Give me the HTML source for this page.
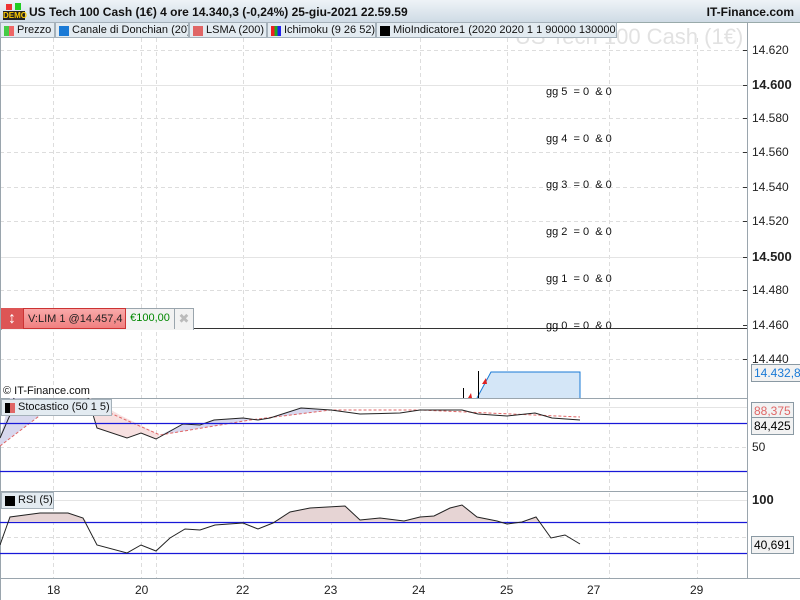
<!DOCTYPE html>
<html><head><meta charset="utf-8"><style>
body{margin:0;width:800px;height:600px;overflow:hidden;background:#fff;font-family:"Liberation Sans",sans-serif;position:relative}
.a{position:absolute;white-space:nowrap}
#title{left:0;top:0;width:800px;height:22px;background:linear-gradient(#eef3f7,#cfdbe5);border-bottom:1px solid #9aa;}
.leg{position:absolute;top:22px;height:16px;background:#e3ebf1;border:1px solid #a5b1ba;font-size:11px;line-height:15px;color:#111;box-sizing:border-box;padding-left:16px;white-space:nowrap;overflow:hidden}
.sw{position:absolute;left:3px;top:3px;width:10px;height:10px}
.ax{font-size:12px;color:#222}
.gg{font-size:11px;color:#111}
.lbl{position:absolute;font-size:12px;border:1px solid #8a99a3;background:#f2f2f2;height:16px;line-height:16px;padding:0 2px}
</style></head><body>
<div class="a" id="title"></div>
<div class="a" style="left:3px;top:3px;width:22px;height:17px">
 <div class="a" style="left:3px;top:1px;width:6px;height:6px;background:#e33"></div>
 <div class="a" style="left:12px;top:0;width:6px;height:7px;background:#2c2"></div>
 <div class="a" style="left:0;top:8px;width:22px;height:9px;background:#222;color:#fc0;font-size:8px;line-height:9px;font-weight:bold;text-align:center">DEMO</div>
</div>
<div class="a" style="left:29px;top:5px;font-size:12px;font-weight:bold;color:#111">US Tech 100 Cash (1€) 4 ore 14.340,3 (-0,24%) 25-giu-2021 22.59.59</div>
<div class="a" style="right:6px;top:5px;font-size:12px;font-weight:bold;color:#111">IT-Finance.com</div>

<div class="a" style="left:515px;top:24px;font-size:22px;color:#e2e2e2">US Tech 100 Cash (1€)</div>

<div class="leg" style="left:0;width:55px"><span class="sw" style="background:linear-gradient(90deg,#4c4 50%,#e66 50%)"></span>Prezzo</div>
<div class="leg" style="left:55px;width:134px"><span class="sw" style="background:#1a7ad6"></span>Canale di Donchian (20)</div>
<div class="leg" style="left:189px;width:78px"><span class="sw" style="background:#e06666"></span>LSMA (200)</div>
<div class="leg" style="left:267px;width:109px"><span class="sw" style="background:linear-gradient(90deg,#e22 33%,#2a2 33%,#2a2 66%,#22e 66%)"></span>Ichimoku (9 26 52)</div>
<div class="leg" style="left:376px;width:241px"><span class="sw" style="background:#000"></span>MioIndicatore1 (2020 2020 1 1 90000 130000)</div>

<svg class="a" style="left:0;top:0" width="800" height="600">
<g stroke="#ddd" stroke-dasharray="4,3" stroke-width="1">
<line x1="53.5" y1="38" x2="53.5" y2="578"/><line x1="141.5" y1="38" x2="141.5" y2="578"/><line x1="156.5" y1="38" x2="156.5" y2="578"/><line x1="243.5" y1="38" x2="243.5" y2="578"/><line x1="331.5" y1="38" x2="331.5" y2="578"/><line x1="420.5" y1="38" x2="420.5" y2="578"/><line x1="507.5" y1="38" x2="507.5" y2="578"/><line x1="609.5" y1="38" x2="609.5" y2="578"/><line x1="697.5" y1="38" x2="697.5" y2="578"/>
<line x1="0" y1="50.5" x2="747" y2="50.5"/><line x1="0" y1="118.5" x2="747" y2="118.5"/><line x1="0" y1="152.5" x2="747" y2="152.5"/><line x1="0" y1="187.5" x2="747" y2="187.5"/><line x1="0" y1="221.5" x2="747" y2="221.5"/><line x1="0" y1="290.5" x2="747" y2="290.5"/><line x1="0" y1="359.5" x2="747" y2="359.5"/>
<line x1="0" y1="447.5" x2="747" y2="447.5"/><line x1="0" y1="537.5" x2="747" y2="537.5"/>
</g>
<g stroke="#e4e4e4"><line x1="0" y1="85.5" x2="747" y2="85.5"/><line x1="0" y1="257.5" x2="747" y2="257.5"/><line x1="0" y1="407.5" x2="747" y2="407.5"/><line x1="0" y1="500.5" x2="747" y2="500.5"/></g>
<line x1="0" y1="328.5" x2="747" y2="328.5" stroke="#333"/>
<path d="M477 398 L491 372 L580 372 L580 398Z" fill="#d4e6f7" stroke="none"/>
<path d="M477 398 L491 372 L580 372 L580 398" fill="none" stroke="#1a7ad6"/>
<line x1="463.5" y1="388" x2="463.5" y2="398" stroke="#000"/><line x1="478.5" y1="371" x2="478.5" y2="398" stroke="#000"/>
<path d="M468 398 l3-5 1 5z M482 384 l4-6 1 6z" fill="#d22"/>
<g stroke="#9aa5ad"><line x1="0" y1="398.5" x2="747" y2="398.5"/><line x1="0" y1="491.5" x2="747" y2="491.5"/><line x1="0" y1="578.5" x2="800" y2="578.5"/><line x1="747.5" y1="22" x2="747.5" y2="578"/><line x1="0.5" y1="38" x2="0.5" y2="600"/></g>
<path d="M0 446 L60 400 L10 398 L0 438Z" fill="#d8d8ee"/>
<path d="M90 398 L97 428 L127 438 L141 433 L156 439 L160 435 L120 415 Z" fill="#f7e0e0"/>
<path d="M160 435 L183 424 L200 425 L214 420 L243 418 L258 420 L270 418 L301 408 L331 410 L300 414 L250 420 Z" fill="#d8d8ee"/>
<path d="M0 446 L60 400 M110 413 L160 435 L250 420 L331 410 L420 410 L580 417" fill="none" stroke="#e06666" stroke-dasharray="3,2"/>
<path d="M0 438 L10 415 L14 398 M88 398 L97 428 L127 438 L141 433 L156 439 L183 424 L200 425 L214 420 L243 418 L258 420 L270 418 L301 408 L331 410 L360 414 L400 413 L420 410 L462 410 L478 414 L507 416 L535 413 L552 418 L580 420" fill="none" stroke="#222"/>
<g stroke="#1818d8" stroke-width="1.2"><line x1="0" y1="423.5" x2="747" y2="423.5"/><line x1="0" y1="471.5" x2="747" y2="471.5"/><line x1="0" y1="522.5" x2="747" y2="522.5"/><line x1="0" y1="553.5" x2="747" y2="553.5"/></g>
<path d="M8 522 L10 517 L40 513 L68 513 L83 518 L87 522Z M275 522 L290 512 L310 508 L345 506 L360 520 L380 518 L404 521 L420 517 L434 516 L450 508 L462 505 L477 517 L497 521 L502 522 Z M525 522 L536 517 L539 522Z" fill="#e6d4d4"/>
<path d="M0 545 L10 517 L40 513 L68 513 L83 518 L97 545 L127 553 L141 545 L156 551 L170 538 L185 529 L200 530 L215 525 L243 523 L258 529 L273 523 L290 512 L310 508 L345 506 L360 520 L380 518 L404 521 L420 517 L434 516 L450 508 L462 505 L477 517 L497 521 L507 524 L522 522 L536 517 L551 538 L565 535 L580 544" fill="none" stroke="#222"/>
<g stroke="#333"><line x1="743" y1="50.5" x2="747" y2="50.5"/><line x1="743" y1="85.5" x2="747" y2="85.5"/><line x1="743" y1="118.5" x2="747" y2="118.5"/><line x1="743" y1="152.5" x2="747" y2="152.5"/><line x1="743" y1="187.5" x2="747" y2="187.5"/><line x1="743" y1="221.5" x2="747" y2="221.5"/><line x1="743" y1="257.5" x2="747" y2="257.5"/><line x1="743" y1="290.5" x2="747" y2="290.5"/><line x1="743" y1="325.5" x2="747" y2="325.5"/><line x1="743" y1="359.5" x2="747" y2="359.5"/></g>
</svg>

<div class="a ax" style="left:752px;top:43px">14.620</div>
<div class="a ax" style="left:752px;top:77px;font-weight:bold;font-size:13px">14.600</div>
<div class="a ax" style="left:752px;top:111px">14.580</div>
<div class="a ax" style="left:752px;top:145px">14.560</div>
<div class="a ax" style="left:752px;top:180px">14.540</div>
<div class="a ax" style="left:752px;top:214px">14.520</div>
<div class="a ax" style="left:752px;top:249px;font-weight:bold;font-size:13px">14.500</div>
<div class="a ax" style="left:752px;top:283px">14.480</div>
<div class="a ax" style="left:752px;top:318px">14.460</div>
<div class="a ax" style="left:752px;top:352px">14.440</div>
<div class="lbl" style="left:751px;top:364px;color:#1a7ad6">14.432,8</div>
<div class="lbl" style="left:751px;top:402px;color:#e06666">88,375</div>
<div class="lbl" style="left:751px;top:417px">84,425</div>
<div class="a ax" style="left:752px;top:440px">50</div>
<div class="a ax" style="left:752px;top:492px;font-weight:bold;font-size:13px">100</div>
<div class="lbl" style="left:751px;top:536px">40,691</div>

<div class="a gg" style="left:546px;top:86px">gg 5 &nbsp;= 0 &nbsp;&amp; 0</div>
<div class="a gg" style="left:546px;top:133px">gg 4 &nbsp;= 0 &nbsp;&amp; 0</div>
<div class="a gg" style="left:546px;top:179px">gg 3 &nbsp;= 0 &nbsp;&amp; 0</div>
<div class="a gg" style="left:546px;top:226px">gg 2 &nbsp;= 0 &nbsp;&amp; 0</div>
<div class="a gg" style="left:546px;top:273px">gg 1 &nbsp;= 0 &nbsp;&amp; 0</div>
<div class="a gg" style="left:546px;top:320px">gg 0 &nbsp;= 0 &nbsp;&amp; 0</div>

<div class="a" style="left:1px;top:308px;width:191px;height:21px;border:1px solid #9aa5ad;border-bottom:none;background:#f2f2f2"></div>
<div class="a" style="left:1px;top:308px;width:22px;height:21px;background:#d55;color:#fff;font-size:16px;font-weight:bold;text-align:center;line-height:21px">↕</div>
<div class="a" style="left:23px;top:308px;width:103px;height:21px;background:linear-gradient(#f9a9a9,#f08080);border:1px solid #c33;box-sizing:border-box;font-size:11px;line-height:20px;padding-left:4px;color:#222;overflow:hidden">V:LIM 1 @14.457,4</div>
<div class="a" style="left:127px;top:308px;width:46px;height:21px;font-size:11px;line-height:21px;color:#080;text-align:center">€100,00</div>
<div class="a" style="left:174px;top:308px;width:18px;height:21px;border-left:1px solid #9aa5ad;color:#bbb;font-size:13px;line-height:21px;text-align:center">✖</div>

<div class="a" style="left:3px;top:385px;font-size:11px;color:#111">© IT-Finance.com</div>
<div class="leg" style="left:1px;top:399px;height:17px;width:111px"><span class="sw" style="background:linear-gradient(90deg,#000 50%,#e06666 50%);top:3px"></span>Stocastico (50 1 5)</div>
<div class="leg" style="left:1px;top:492px;height:17px;width:53px"><span class="sw" style="background:#000;top:3px"></span>RSI (5)</div>

<div class="a ax" style="left:47px;top:583px">18</div>
<div class="a ax" style="left:135px;top:583px">20</div>
<div class="a ax" style="left:236px;top:583px">22</div>
<div class="a ax" style="left:324px;top:583px">23</div>
<div class="a ax" style="left:412px;top:583px">24</div>
<div class="a ax" style="left:500px;top:583px">25</div>
<div class="a ax" style="left:587px;top:583px">27</div>
<div class="a ax" style="left:690px;top:583px">29</div>
</body></html>
